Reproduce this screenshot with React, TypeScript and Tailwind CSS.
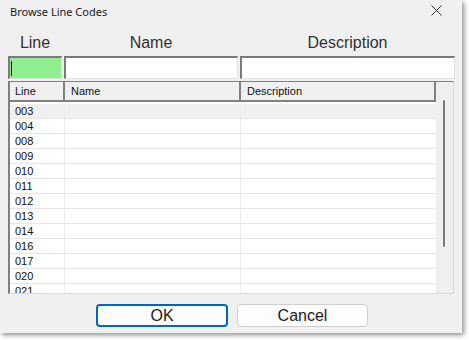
import React from "react";

const rows = ["003", "004", "008", "009", "010", "011", "012", "013", "014", "016", "017", "020", "021"];

export default function App() {
  return (
    <div className="w-[469px] h-[340px] bg-white relative overflow-hidden" style={{ fontFamily: '"Liberation Sans", Arial, sans-serif' }}>
      <div className="w-[462px] h-[333px] bg-[#f0f0f0] shadow-[2px_2px_5px_rgba(0,0,0,0.45)] flex flex-col">
        {/* title bar */}
        <div className="h-[22px] flex items-center justify-between pl-[10px] pr-[20px]">
          <span className="text-[11px] text-[#1a1a1a] leading-none" style={{ fontFamily: '"Noto Sans", "Open Sans", sans-serif' }}>
            Browse Line Codes
          </span>
          <svg width="11" height="11" viewBox="0 0 11 11" className="mt-[-2px]">
            <path d="M0.5 0.5 L10.5 10.5 M10.5 0.5 L0.5 10.5" stroke="#333" strokeWidth="1" fill="none" />
          </svg>
        </div>

        {/* labels */}
        <div className="mt-[12px] h-[18px] flex pl-[8px] text-[16px] leading-[18px] text-[#303030]">
          <div className="w-[54px] text-center">Line</div>
          <div className="w-[174px] ml-[2px] text-center">Name</div>
          <div className="w-[215px] ml-[2px] text-center">Description</div>
        </div>

        {/* inputs */}
        <div className="mt-[4px] h-[23px] flex pl-[8px]">
          <div className="w-[54px] h-full bg-[#90ee90] border-t-2 border-l-2 border-t-[#7a7a7a] border-l-[#7a7a7a] border-r border-b border-r-[#e0e0e0] border-b-[#e0e0e0] flex items-center pl-[1px]">
            <div className="w-[1px] h-[15px] bg-black" />
          </div>
          <div className="w-[174px] ml-[2px] h-full bg-white border-t-2 border-l-2 border-t-[#7a7a7a] border-l-[#7a7a7a] border-r border-b border-r-[#e0e0e0] border-b-[#e0e0e0]" />
          <div className="w-[215px] ml-[2px] h-full bg-white border-t-2 border-l-2 border-t-[#7a7a7a] border-l-[#7a7a7a] border-r border-b border-r-[#e0e0e0] border-b-[#e0e0e0]" />
        </div>

        {/* grid */}
        <div className="mt-[2px] ml-[8px] w-[446px] h-[213px] border-t border-l-2 border-t-[#808080] border-l-[#808080] border-r border-b border-r-[#d8d8d8] border-b-[#d8d8d8] flex overflow-hidden">
          <div className="w-[426px] flex flex-col bg-white">
            <div className="h-[20px] flex bg-[#f0f0f0] text-[11px] text-[#101010] shrink-0">
              <div className="w-[55px] border-r-2 border-b-2 border-[#808080] pl-[5px] flex items-center">Line</div>
              <div className="w-[176px] border-r-2 border-b-2 border-[#808080] pl-[6px] flex items-center">Name</div>
              <div className="w-[195px] border-r-2 border-b-2 border-[#808080] pl-[6px] flex items-center">Description</div>
            </div>
            <div className="pt-[2px] flex flex-col">
              {rows.map((r, i) => (
                <div key={r} className={`h-[15px] shrink-0 flex border-b border-[#e6e6e6] text-[11px] text-[#101010] ${i === 0 ? "bg-[#f0f0f0]" : "bg-white"}`}>
                  <div className="w-[55px] border-r border-[#ececec] pl-[5px] flex items-center">{r}</div>
                  <div className="w-[176px] border-r border-[#ececec]" />
                  <div className="w-[195px]" />
                </div>
              ))}
            </div>
          </div>
          <div className="flex-1 bg-[#efefef] relative">
            <div className="absolute left-[7px] top-[18px] w-[2px] h-[147px] bg-[#7c7c7c] rounded-full" />
          </div>
        </div>

        {/* buttons */}
        <div className="mt-[10px] flex justify-center gap-[9px] pl-[2px]">
          <button className="w-[132px] h-[23px] bg-[#fdfdfd] border-2 border-[#0067c0] rounded-[4px] text-[16px] leading-none text-[#1a1a1a]">OK</button>
          <button className="w-[131px] h-[23px] bg-[#fdfdfd] border border-[#cfcfcf] rounded-[4px] text-[16px] leading-none text-[#1a1a1a]">Cancel</button>
        </div>
      </div>
    </div>
  );
}
